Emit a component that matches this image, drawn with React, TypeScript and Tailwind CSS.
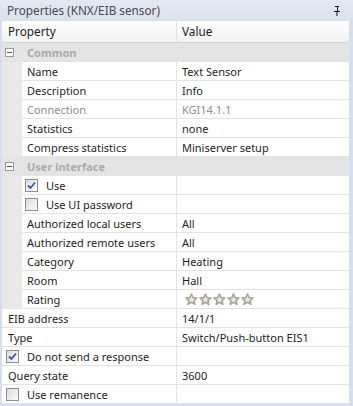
import { ReactNode } from "react";

type Row =
  | { kind: "group"; label: string }
  | {
      kind: "prop";
      label: string;
      value?: ReactNode;
      nested?: boolean;
      disabled?: boolean;
      check?: boolean;
    };

function Checkbox({ checked }: { checked: boolean }) {
  return (
    <span className="mr-[8px] flex size-[13px] shrink-0 items-center justify-center border border-[#8f8f8f] bg-gradient-to-br from-[#dcdcdc] to-[#fbfbfb]">
      {checked && (
        <svg width="9" height="9" viewBox="0 0 9 9">
          <path d="M1 4.5 L3.5 7 L8 1.5" fill="none" stroke="#3b5a9e" strokeWidth="1.8" />
        </svg>
      )}
    </span>
  );
}

function Stars() {
  return (
    <span className="flex gap-[1px] pl-[3px]">
      {[0, 1, 2, 3, 4].map((i) => (
        <svg key={i} width="13" height="13" viewBox="0 0 24 24">
          <path
            d="M12 2l2.9 6.6 7.1.6-5.4 4.7 1.6 7-6.2-3.7-6.2 3.7 1.6-7L2 9.2l7.1-.6z"
            fill="#eeeae0"
            stroke="#a9a597"
            strokeWidth="3"
            strokeLinejoin="round"
          />
        </svg>
      ))}
    </span>
  );
}

const ROWS: Row[] = [
  { kind: "group", label: "Common" },
  { kind: "prop", nested: true, label: "Name", value: "Text Sensor" },
  { kind: "prop", nested: true, label: "Description", value: "Info" },
  { kind: "prop", nested: true, label: "Connection", value: "KGI14.1.1", disabled: true },
  { kind: "prop", nested: true, label: "Statistics", value: "none" },
  { kind: "prop", nested: true, label: "Compress statistics", value: "Miniserver setup" },
  { kind: "group", label: "User interface" },
  { kind: "prop", nested: true, label: "Use", check: true },
  { kind: "prop", nested: true, label: "Use UI password", check: false },
  { kind: "prop", nested: true, label: "Authorized local users", value: "All" },
  { kind: "prop", nested: true, label: "Authorized remote users", value: "All" },
  { kind: "prop", nested: true, label: "Category", value: "Heating" },
  { kind: "prop", nested: true, label: "Room", value: "Hall" },
  { kind: "prop", nested: true, label: "Rating", value: <Stars /> },
  { kind: "prop", label: "EIB address", value: "14/1/1" },
  { kind: "prop", label: "Type", value: "Switch/Push-button EIS1" },
  { kind: "prop", label: "Do not send a response", check: true },
  { kind: "prop", label: "Query state", value: "3600" },
  { kind: "prop", label: "Use remanence", check: false },
];

function GroupRow({ label }: { label: string }) {
  return (
    <div className="flex h-[19px] items-center bg-[#e4e4e4]">
      <span className="ml-[3px] flex size-[9px] items-center justify-center border border-[#9a9a9a] bg-white">
        <span className="h-px w-[5px] bg-[#555]" />
      </span>
      <span className="ml-[13px] font-bold text-[#aaaaaa]">{label}</span>
    </div>
  );
}

function PropRow({ row }: { row: Extract<Row, { kind: "prop" }> }) {
  const tone = row.disabled ? "text-[#8d8d8d]" : "text-[#1e1e1e]";
  return (
    <div className="flex h-[19px]">
      {row.nested && <div className="w-[20px] shrink-0 bg-[#e8e8e8]" />}
      <div className="flex flex-1 border-b border-[#e3e3e3]">
        <div
          className={`flex shrink-0 items-center border-r border-[#e3e3e3] ${
            row.nested ? "w-[155px] pl-[3px]" : "w-[175px] pl-[4px]"
          } ${tone}`}
        >
          {row.check !== undefined ? (
            <>
              <Checkbox checked={row.check} />
              {row.label}
            </>
          ) : (
            <span className="pl-[2px]">{row.label}</span>
          )}
        </div>
        <div className={`flex flex-1 items-center pl-[5px] ${tone}`}>{row.value}</div>
      </div>
    </div>
  );
}

export default function App() {
  return (
    <div className="flex h-[406px] w-[353px] flex-col bg-[#d6dfee] font-['Noto_Sans',sans-serif] text-[11px] leading-none">
      <div className="flex h-[21px] shrink-0 items-center justify-between bg-gradient-to-b from-[#e4e9f1] to-[#d9e1ed] pl-[7px] pr-[12px]">
        <span className="text-[11.75px] text-[#4b4b4b]">Properties (KNX/EIB sensor)</span>
        <svg width="8" height="10" viewBox="0 0 8 10">
          <path d="M2 0h4v1H5v4h2v1H1V5h2V1H2z M3 1v4h1V1z" fill="#111" />
          <path d="M3.5 6h1v4h-1z" fill="#111" />
        </svg>
      </div>
      <div className="ml-[2px] mr-[4px] flex flex-1 flex-col bg-white">
        <div className="flex h-[22px] shrink-0 border-b border-[#d5d5d5] bg-gradient-to-b from-white to-[#f1f2f4] text-[11.75px]">
          <div className="flex w-[175px] items-center border-r border-[#e2e2e2] pl-[6px] text-[#1e1e1e]">
            Property
          </div>
          <div className="flex flex-1 items-center pl-[5px] text-[#1e1e1e]">Value</div>
        </div>
        {ROWS.map((row, i) =>
          row.kind === "group" ? (
            <GroupRow key={i} label={row.label} />
          ) : (
            <PropRow key={i} row={row} />
          ),
        )}
      </div>
      <div className="h-[2px] shrink-0" />
    </div>
  );
}
